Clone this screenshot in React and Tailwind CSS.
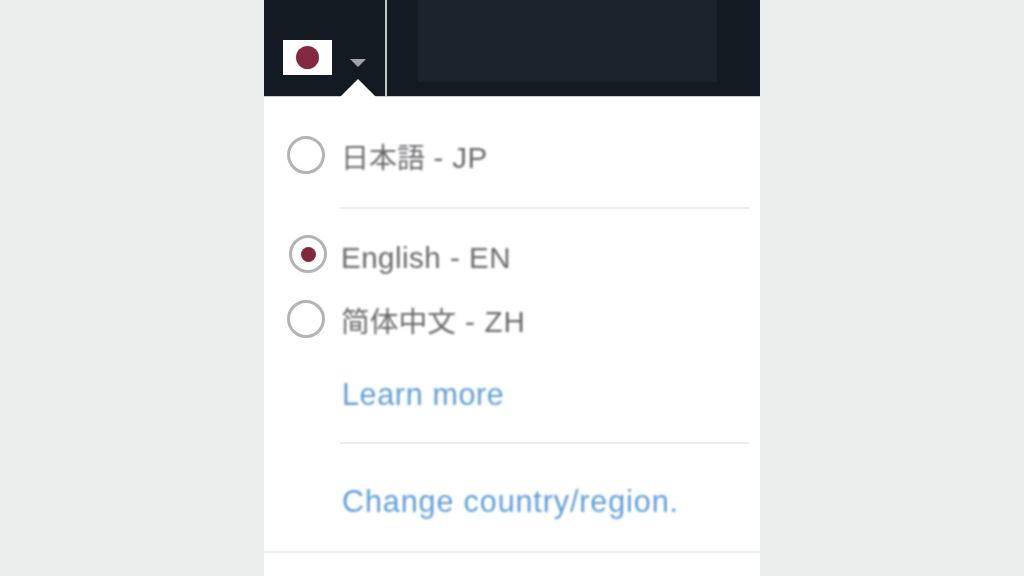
export default function App() {
  const font = { fontFamily: '"Liberation Sans", "Noto Sans CJK JP", sans-serif' };
  return (
    <div className="w-[1024px] h-[576px] overflow-hidden bg-[#eceeed] flex justify-center" style={font}>
      <div className="w-[496px] h-[576px] bg-white flex flex-col">
        <header className="relative h-[97px] shrink-0 bg-[#141a22] flex border-b border-[#c9c9cc]">
          <div className="w-[123px] h-full shrink-0 border-r-2 border-[#c4c5c8] flex items-start pt-[40px] pl-[19px]">
            <div className="w-[49px] h-[35px] bg-white flex items-center justify-center blur-[0.7px]">
              <div className="w-[23px] h-[23px] rounded-full bg-[#83293f]" />
            </div>
            <svg className="ml-[18px] mt-[19px] blur-[0.7px]" width="16" height="8" viewBox="0 0 16 8"><path d="M0 0H16L8 8Z" fill="#a2a4aa" /></svg>
          </div>
          <div className="ml-[31px] w-[299px] h-[82px] bg-[#1b232d]" />
          <svg className="absolute left-[76px] top-[79px]" width="36" height="18" viewBox="0 0 36 18"><path d="M0 18L18 0L36 18Z" fill="#ffffff" /></svg>
        </header>

        <div className="flex items-center h-[38px] mt-[39px] pl-[23px] text-[#69696d] text-[29.5px] tracking-[0.35px]">
          <span className="w-[38px] h-[38px] rounded-full border-[3px] border-[#b4b4b8] shrink-0 blur-[0.7px]" />
          <span className="block ml-[16px] mt-[6px] leading-none blur-[0.8px]"><span className="text-[28px] tracking-normal">日本語</span> - JP</span>
        </div>
        <div className="h-[2px] bg-[#ececec] ml-[76px] mr-[11px] mt-[33px]" />

        <div className="flex items-center h-[38px] mt-[27px] pl-[25px] text-[#69696d] text-[29.5px] tracking-[0.5px]">
          <span className="w-[38px] h-[38px] mb-[2px] rounded-full border-[3px] border-[#b4b4b8] shrink-0 flex items-center justify-center blur-[0.7px]">
            <span className="w-[15px] h-[15px] rounded-full bg-[#83293f]" />
          </span>
          <span className="block ml-[14px] mt-[6px] leading-none blur-[0.8px]">English - EN</span>
        </div>
        <div className="flex items-center h-[38px] mt-[27px] pl-[23px] text-[#69696d] text-[29.5px] tracking-[0.8px]">
          <span className="w-[38px] h-[38px] mb-[2px] rounded-full border-[3px] border-[#b4b4b8] shrink-0 blur-[0.7px]" />
          <span className="block ml-[16px] mt-[3px] leading-none blur-[0.8px]"><span className="text-[28.75px] tracking-normal">简体中文</span> - ZH</span>
        </div>

        <a className="block ml-[78px] mt-[38px] text-[30.5px] leading-[34px] text-[#5f9dd9] tracking-[0.65px] blur-[0.8px]">Learn more</a>
        <div className="h-[2px] bg-[#ececec] ml-[76px] mr-[11px] mt-[31px]" />
        <a className="block ml-[78px] mt-[40px] mb-[1px] text-[30.5px] leading-[34px] text-[#5f9dd9] tracking-[0.9px] blur-[0.8px]">Change country/region.</a>
        <div className="h-[2px] bg-[#ececec] mt-[32px]" />
      </div>
    </div>
  );
}
